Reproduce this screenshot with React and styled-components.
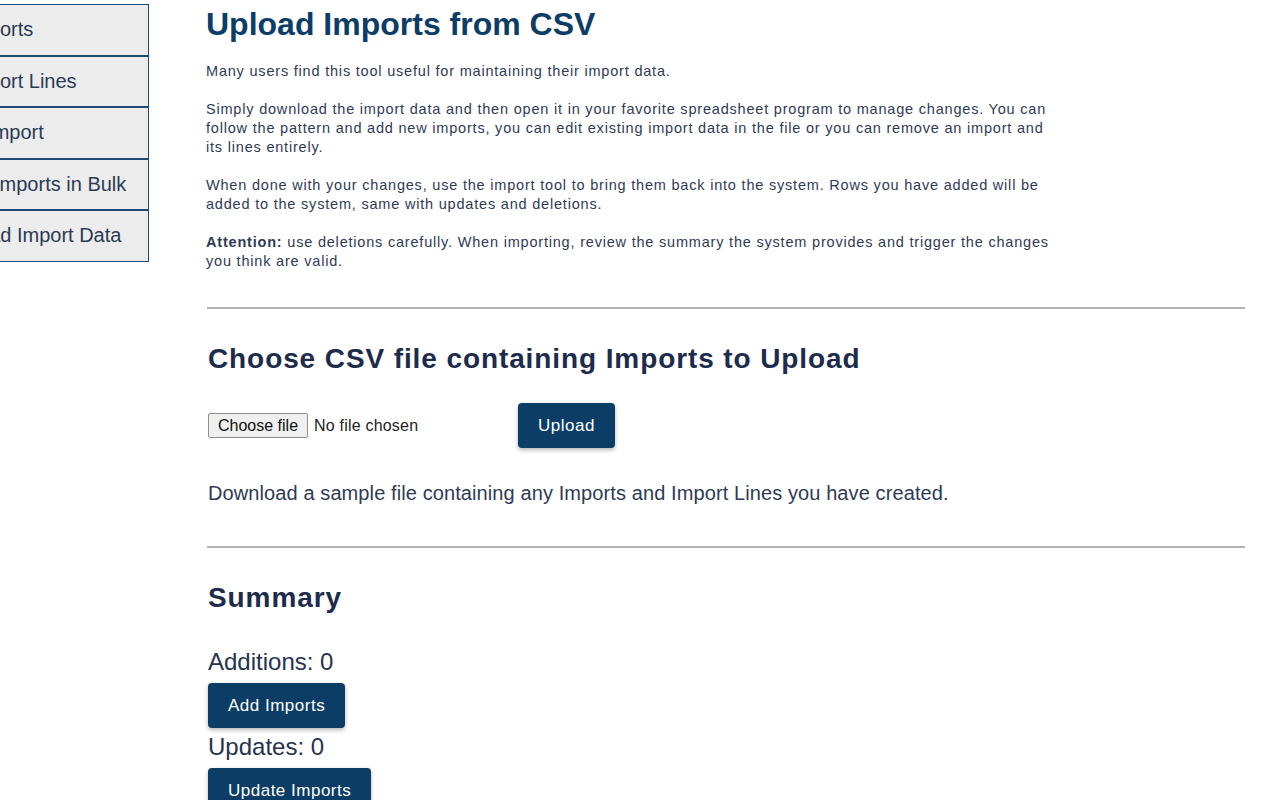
import React from 'react';
import styled, { createGlobalStyle } from 'styled-components';

const GlobalStyle = createGlobalStyle`
  body {
    margin: 0;
    background: #ffffff;
    font-family: "Liberation Sans", Arial, Helvetica, sans-serif;
    overflow: hidden;
  }
`;

const Page = styled.div`
  display: flex;
  align-items: flex-start;
  width: 1280px;
  height: 800px;
  overflow: hidden;
`;

const Sidebar = styled.nav`
  display: flex;
  flex-direction: column;
  width: 149px;
  margin-top: 4px;
  flex-shrink: 0;
  overflow: hidden;
`;

const NavItem = styled.a`
  display: flex;
  align-items: center;
  height: 49.5px;
  border: 1px solid #1e4a72;
  border-left: none;
  background: #ececec;
  color: #2b3a55;
  font-size: 20px;
  white-space: nowrap;
  text-decoration: none;

  span {
    margin-left: ${(p) => p.$shift}px;
  }
`;

const Main = styled.main`
  display: flex;
  flex-direction: column;
  width: 1040px;
  margin-left: 57px;
`;

const Title = styled.h1`
  margin: 4px 0 0;
  font-size: 32px;
  line-height: 40px;
  font-weight: 700;
  color: #0c3d67;
`;

const Intro = styled.div`
  display: flex;
  flex-direction: column;
  gap: 19px;
  max-width: 852px;
  margin-top: 18px;
`;

const Para = styled.p`
  margin: 0;
  font-size: 14.5px;
  line-height: 19px;
  letter-spacing: 0.8px;
  color: #2e3b56;
`;

const Rule = styled.hr`
  width: 1038px;
  margin: ${(p) => p.$top}px 0 0 1px;
  border: none;
  border-top: 2px solid #b4b4b4;
`;

const Section = styled.section`
  display: flex;
  flex-direction: column;
  padding-left: 2px;
`;

const Heading = styled.h2`
  margin: ${(p) => p.$top}px 0 0;
  font-size: 28px;
  line-height: 34px;
  font-weight: 700;
  letter-spacing: 0.9px;
  color: #1d2c4b;
`;

const FileRow = styled.div`
  display: flex;
  align-items: center;
  margin-top: 27px;
`;

const FileButton = styled.label`
  display: inline-flex;
  align-items: center;
  height: 23px;
  padding: 0 9px;
  border: 1px solid #8f8f8f;
  border-radius: 2px;
  background: #efefef;
  color: #111;
  font-size: 16px;
`;

const FileName = styled.span`
  margin-left: 6px;
  width: 204px;
  color: #222;
  font-size: 16px;
  letter-spacing: 0.2px;
`;

const Button = styled.button`
  display: inline-flex;
  align-items: center;
  justify-content: center;
  align-self: ${(p) => (p.$inline ? 'center' : 'flex-start')};
  height: 45px;
  padding: 0 20px;
  border: none;
  border-radius: 4px;
  background: #0b3d66;
  color: #ffffff;
  font-family: inherit;
  font-size: 17px;
  letter-spacing: 0.5px;
  box-shadow: 0 2px 4px rgba(0, 0, 0, 0.3);
  cursor: pointer;
`;

const Note = styled.p`
  margin: 32px 0 0;
  font-size: 20px;
  line-height: 26px;
  letter-spacing: 0.1px;
  color: #2e3b56;
`;

const Count = styled.div`
  margin-top: ${(p) => p.$top}px;
  font-size: 24px;
  line-height: 30px;
  color: #25334f;
  margin-bottom: 6px;
`;

const navItems = [
  { label: 'View Imports', shift: -82 },
  { label: 'View Import Lines', shift: -82 },
  { label: 'Add Import', shift: -54 },
  { label: 'Edit Imports in Bulk', shift: -46 },
  { label: 'Upload Import Data', shift: -52 },
];

export default function App() {
  return (
    <>
      <GlobalStyle />
      <Page>
        <Sidebar>
          {navItems.map((item) => (
            <NavItem key={item.label} href="#" $shift={item.shift}>
              <span>{item.label}</span>
            </NavItem>
          ))}
        </Sidebar>

        <Main>
          <Title>Upload Imports from CSV</Title>
          <Intro>
            <Para>Many users find this tool useful for maintaining their import data.</Para>
            <Para>
              Simply download the import data and then open it in your favorite spreadsheet
              program to manage changes. You can follow the pattern and add new imports, you can
              edit existing import data in the file or you can remove an import and its lines
              entirely.
            </Para>
            <Para>
              When done with your changes, use the import tool to bring them back into the
              system. Rows you have added will be added to the system, same with updates and
              deletions.
            </Para>
            <Para>
              <strong>Attention:</strong> use deletions carefully. When importing, review the
              summary the system provides and trigger the changes you think are valid.
            </Para>
          </Intro>

          <Rule $top={36} />

          <Section>
            <Heading $top={33}>Choose CSV file containing Imports to Upload</Heading>
            <FileRow>
              <FileButton>Choose file</FileButton>
              <FileName>No file chosen</FileName>
              <Button type="button" $inline>
                Upload
              </Button>
            </FileRow>
            <Note>Download a sample file containing any Imports and Import Lines you have created.</Note>
          </Section>

          <Rule $top={40} />

          <Section>
            <Heading $top={33}>Summary</Heading>
            <Count $top={32}>Additions: 0</Count>
            <Button type="button">Add Imports</Button>
            <Count $top={4}>Updates: 0</Count>
            <Button type="button">Update Imports</Button>
          </Section>
        </Main>
      </Page>
    </>
  );
}
